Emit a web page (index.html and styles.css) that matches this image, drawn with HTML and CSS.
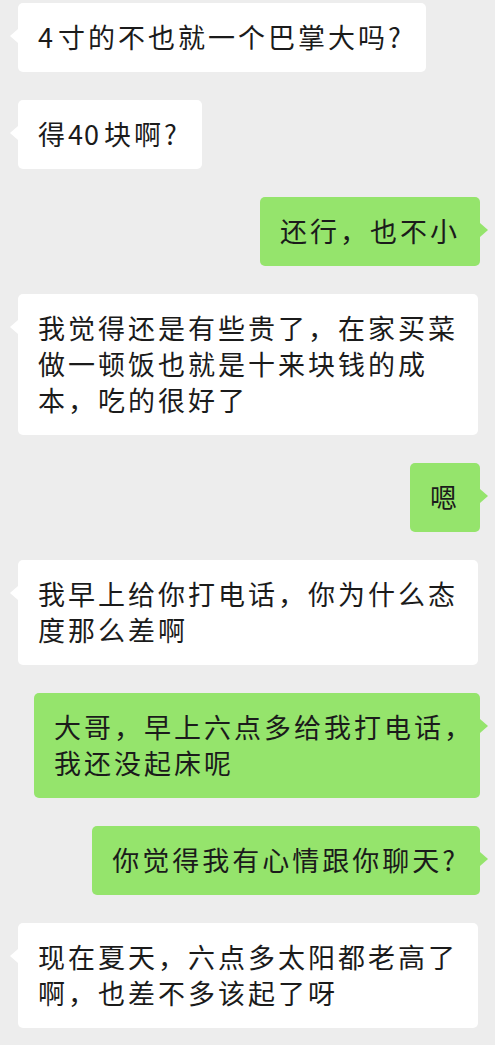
FILE: index.html
```html
<!DOCTYPE html>
<html lang="zh-CN">
<head>
<meta charset="utf-8">
<title>聊天</title>
<link rel="stylesheet" href="styles.css">
</head>
<body>
<div class="chat">
  <div class="msg left"><span class="lat">4</span>寸的不也就一个巴掌大吗<span class="lat">?</span></div>
  <div class="msg left">得<span class="lat num">40</span>块啊<span class="lat">?</span></div>
  <div class="msg right">还行，也不小</div>
  <div class="msg left">我觉得还是有些贵了，在家买菜<br>做一顿饭也就是十来块钱的成<br>本，吃的很好了</div>
  <div class="msg right">嗯</div>
  <div class="msg left">我早上给你打电话，你为什么态<br>度那么差啊</div>
  <div class="msg right">大哥，早上六点多给我打电话<span class="tight">，</span><br>我还没起床呢</div>
  <div class="msg right">你觉得我有心情跟你聊天<span class="lat">?</span></div>
  <div class="msg left">现在夏天，六点多太阳都老高了<br>啊，也差不多该起了呀</div>
</div>
</body>
</html>
```

FILE: styles.css
```css
html, body {
  margin: 0;
  padding: 0;
  background: #ededed;
}
body {
  width: 495px;
  height: 1045px;
  overflow: hidden;
  font-family: "Noto Sans CJK SC", "Noto Sans", sans-serif;
}
.chat {
  display: flex;
  flex-direction: column;
  gap: 28px;
  padding-top: 3px;
}
.msg {
  position: relative;
  font-size: 27px;
  letter-spacing: 3px;
  line-height: 36px;
  color: #1b1b1b;
  padding: 16px 20px 17px;
  border-radius: 5px;
  white-space: nowrap;
}
.msg::before {
  content: "";
  position: absolute;
  top: 26px;
  width: 0;
  height: 0;
  border-top: 7px solid transparent;
  border-bottom: 7px solid transparent;
}
.left {
  align-self: flex-start;
  margin-left: 18px;
  background: #ffffff;
}
.left::before {
  left: -8px;
  border-right: 8px solid #ffffff;
}
.right {
  align-self: flex-end;
  margin-right: 15px;
  background: #95e46c;
}
.right::before {
  right: -8px;
  border-left: 8px solid #95e46c;
}
.lat {
  letter-spacing: 5px;
}
.num {
  letter-spacing: 1px;
  padding-right: 4px;
}
.tight {
  letter-spacing: 0;
  margin-right: -11px;
}
```
